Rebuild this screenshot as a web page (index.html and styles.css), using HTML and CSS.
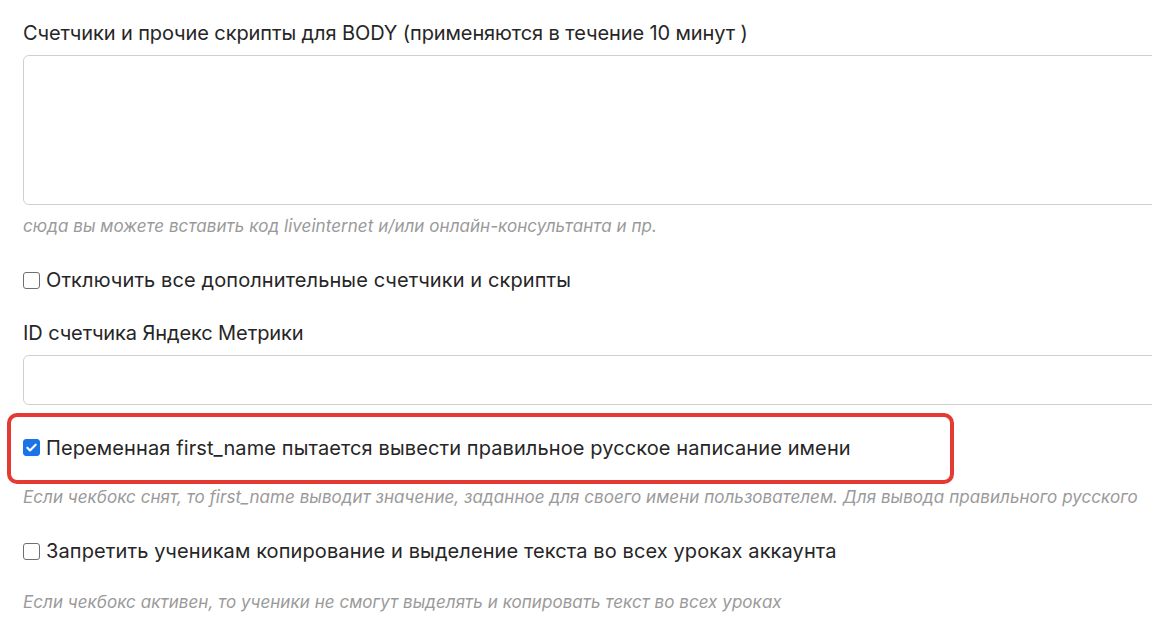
FILE: index.html
```html
<!DOCTYPE html>
<html lang="ru">
<head>
<meta charset="utf-8">
<link rel="stylesheet" href="styles.css">
</head>
<body>
<div class="form">
  <div class="group g1">
    <label class="label">Счетчики и прочие скрипты для BODY (применяются в течение 10 минут )</label>
    <textarea class="textarea"></textarea>
    <p class="help">сюда вы можете вставить код liveinternet и/или онлайн-консультанта и пр.</p>
  </div>
  <div class="check-row r1">
    <span class="cb"></span>
    <span class="check-text">Отключить все дополнительные счетчики и скрипты</span>
  </div>
  <div class="group g2">
    <label class="label">ID счетчика Яндекс Метрики</label>
    <input class="input" type="text">
  </div>
  <div class="highlight">
    <div class="check-row">
      <span class="cb checked"><svg viewBox="0 0 18 18" width="18" height="18"><path d="M4 9.3l3.2 3.2L14 5.7" fill="none" stroke="#fff" stroke-width="2.6" stroke-linecap="round" stroke-linejoin="round"/></svg></span>
      <span class="check-text">Переменная first_name пытается вывести правильное русское написание имени</span>
    </div>
  </div>
  <p class="help nowrap h2">Если чекбокс снят, то first_name выводит значение, заданное для своего имени пользователем. Для вывода правильного русского</p>
  <div class="check-row r3">
    <span class="cb"></span>
    <span class="check-text">Запретить ученикам копирование и выделение текста во всех уроках аккаунта</span>
  </div>
  <p class="help h3">Если чекбокс активен, то ученики не смогут выделять и копировать текст во всех уроках</p>
</div>
</body>
</html>
```
FILE: styles.css
```css
html, body {
  margin: 0;
  padding: 0;
  background: #fff;
  overflow: hidden;
}
body {
  font-family: "Inter", "Noto Sans", sans-serif;
  color: #262626;
  width: 1152px;
  height: 632px;
}
.form {
  padding: 20px 0 0 23px;
  display: flex;
  flex-direction: column;
}
.label {
  display: block;
  font-size: 20px;
  line-height: 26px;
  letter-spacing: -0.1px;
  color: #262626;
}
.textarea {
  display: block;
  box-sizing: border-box;
  width: 1200px;
  height: 150px;
  margin: 9px 0 0;
  border: 1px solid #cfcfcf;
  border-radius: 6px;
  resize: none;
  background: #fff;
}
.input {
  display: block;
  box-sizing: border-box;
  width: 1200px;
  height: 50px;
  margin: 9px 0 0;
  border: 1px solid #cfcfcf;
  border-radius: 6px;
  background: #fff;
}
.help {
  margin: 0;
  font-size: 17px;
  line-height: 22px;
  font-style: italic;
  color: #9a9a9a;
  letter-spacing: 0.05px;
}
.g1 .help { margin-top: 10px; }
.nowrap { white-space: nowrap; }
.check-row {
  display: flex;
  align-items: center;
  gap: 6px;
  font-size: 20px;
  line-height: 26px;
  letter-spacing: 0.1px;
}
.cb {
  box-sizing: border-box;
  width: 17px;
  height: 17px;
  border: 1.5px solid #6f6f6f;
  border-radius: 3px;
  flex: none;
  display: flex;
  align-items: center;
  justify-content: center;
}
.cb.checked {
  background: #1a73e8;
  border-color: #1a73e8;
}
.cb.checked svg { width: 15px; height: 15px; }
.r1 { margin-top: 30px; }
.g2 { margin-top: 27px; }
.highlight {
  margin: 8px 0 0 -16px;
  width: 947px;
  height: 71px;
  box-sizing: border-box;
  border: 4px solid #e53a32;
  border-radius: 10px;
  padding: 0 0 2px 12px;
  display: flex;
  align-items: center;
}
.h2 { margin-top: 2px; }
.r3 { margin-top: 30px; }
.h3 { margin-top: 27px; }
```
